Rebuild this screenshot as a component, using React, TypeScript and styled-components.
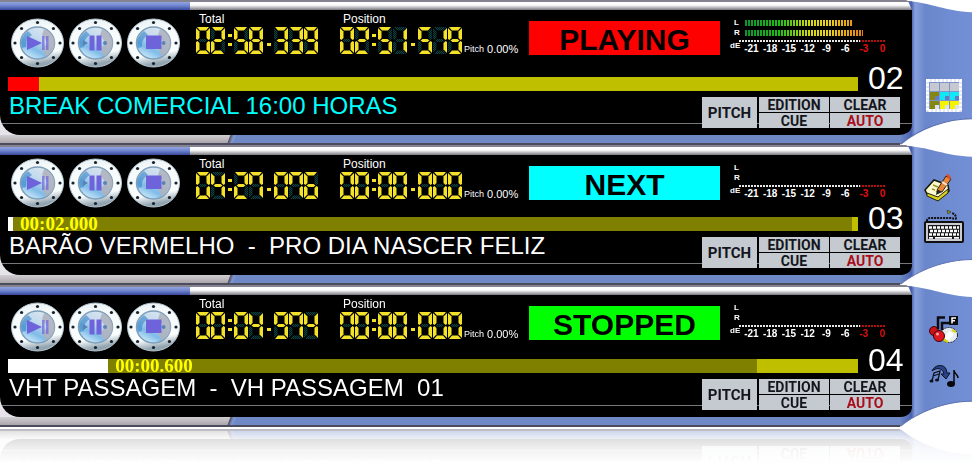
import React from "react";
import styled, { createGlobalStyle } from "styled-components";

const GlobalStyle = createGlobalStyle`
  * { box-sizing: border-box; }
  body {
    margin: 0;
    background: #fff;
    font-family: "Liberation Sans", Arial, sans-serif;
  }
  button { margin: 0; padding: 0; border: 0; font: inherit; cursor: pointer; }
`;

const Rack = styled.main`
  overflow: hidden;
  padding-bottom: 42px;
`;

const DeckFrame = styled.section<{ $reflect: boolean }>`
  position: relative;
  display: flex;
  ${(p) =>
    p.$reflect &&
    "-webkit-box-reflect: below 2px linear-gradient(transparent 76%, rgba(255,255,255,0.06) 86%, rgba(255,255,255,0.13) 93%, rgba(255,255,255,0.4));"}
`;

const Body = styled.div`
  flex: 1;
  min-width: 0;
`;

const TopTrim = styled.div`
  height: 10px;
  border-top: 2px solid #85838f;
  background:
    linear-gradient(#93a5e0, #7086cf 45%, #37479c) 0 0 / 190px 100% no-repeat,
    linear-gradient(#ffffff, #fafafa 40%, #77777f);
`;

const BottomTrim = styled.div`
  height: 10px;
  border-bottom: 2px solid #4c4c5c;
  background:
    linear-gradient(110deg, transparent 216px, #55555f 217px, #7f96d4 220px, #6f88c6 223px),
    linear-gradient(#d2cfd3, #aaa5ab);
`;

const ScreenWell = styled.div`
  background: linear-gradient(90deg, #e6e4ea 0 40px, #5c76bd 60px);
`;

const Screen = styled.div`
  border-radius: 0 0 8px 20px;
  background: linear-gradient(#77777c, #77777c) 0 calc(100% - 11px) / 100% 1px no-repeat #000;
  color: #fff;
`;

const Upper = styled.div<{ $height: number }>`
  display: flex;
  height: ${(p) => p.$height}px;
  padding: 0 20px 0 11px;
`;

const Knobs = styled.div<{ $top: number }>`
  display: flex;
  gap: 5px;
  height: 50px;
  margin: ${(p) => p.$top}px 16px 0 0;
`;

const Knob = styled.button`
  width: 53px;
  height: 50px;
  background: transparent;
  svg { display: block; }
`;

const Clock = styled.div`
  width: 122px;
  margin: 2px 22px 0 0;
  & + & { margin-right: 2px; }
`;

const ClockLabel = styled.div`
  padding-left: 3px;
  font-size: 12px;
  line-height: 14px;
`;

const Digits = styled.svg`
  display: block;
  margin-top: 1px;
`;

const Pitch = styled.div`
  display: flex;
  gap: 3px;
  width: 57px;
  margin: 33px 8px 0 0;
  font-size: 11px;
  line-height: 12px;
  small { font-size: 9px; }
`;

const Status = styled.div<{ $color: string }>`
  flex: 1;
  height: 34px;
  margin: 11px 10px 0 0;
  background: ${(p) => p.$color};
  color: #000;
  font-size: 30px;
  font-weight: bold;
  line-height: 38px;
  text-align: center;
`;

const MeterBox = styled.div`
  width: 162px;
  margin-top: 8px;
  font-weight: bold;
`;

const Channel = styled.div`
  display: flex;
  align-items: center;
  height: 10px;
  padding-left: 4px;
  font-size: 8px;
  line-height: 10px;
`;

const ChannelName = styled.span`
  width: 11px;
`;

const Level = styled.div`
  height: 6px;
  background:
    repeating-linear-gradient(90deg, transparent 0 2px, #101000 2px 3px),
    linear-gradient(90deg, #109038, #18c018 34px, #d0d818 64px, #e8d028 84px, #e07818 120px);
`;

const Ticks = styled.div`
  height: 2px;
  margin: 2px 7px 0 9px;
  background:
    repeating-linear-gradient(90deg, transparent 0 2px, #000 2px 3px),
    linear-gradient(90deg, #e8e8e8 83%, #b01010 83%);
`;

const Scale = styled.div`
  display: flex;
  font-size: 10px;
  line-height: 13px;
`;

const Unit = styled.span`
  width: 12px;
  font-size: 8px;
  line-height: 8px;
`;

const Marks = styled.div`
  display: grid;
  flex: 1;
  grid-template-columns: repeat(8, 1fr);
  text-align: center;
`;

const Mark = styled.span<{ $hot: boolean }>`
  color: ${(p) => (p.$hot ? "#e01010" : "#fff")};
`;

const TrackRow = styled.div`
  display: flex;
  align-items: flex-end;
  height: 28px;
  margin-top: -14px;
  padding-left: 8px;
`;

const Track = styled.div`
  display: flex;
  flex: 1;
  height: 14px;
  background: #bfbf00;
`;

const Segment = styled.div<{ $color: string }>`
  background: ${(p) => p.$color};
`;

const Remaining = styled.span`
  display: block;
  padding-left: 7px;
  color: #ff0;
  font: bold 19px/14px "Liberation Serif", "Times New Roman", serif;
`;

const DeckNumber = styled.div`
  width: 54px;
  height: 28px;
  padding-left: 10px;
  font-size: 32px;
  line-height: 30px;
`;

const Lower = styled.div`
  display: flex;
  justify-content: space-between;
  height: 44px;
  padding: 6px 12px 0 9px;
`;

const Title = styled.h2<{ $color: string }>`
  margin: 0;
  color: ${(p) => p.$color};
  font-size: 24px;
  font-weight: normal;
  line-height: 18px;
  white-space: pre;
`;

const Keys = styled.div`
  display: grid;
  grid-template-columns: 56px 70px 70px;
  grid-template-rows: 15px 15px;
  gap: 1px;
  height: 31px;
`;

const Key = styled.button<{ $tall?: boolean; $red?: boolean }>`
  grid-row: ${(p) => (p.$tall ? "span 2" : "auto")};
  margin-right: ${(p) => (p.$tall ? 1 : 0)}px;
  background: #c5cad1;
  color: ${(p) => (p.$red ? "#a80e1c" : "#14161c")};
  font: bold ${(p) => (p.$tall ? 15 : 14)}px/16px Roboto, "Liberation Sans", sans-serif;
`;

const Handle = styled.aside`
  display: flex;
  flex-direction: column;
  align-items: center;
  justify-content: flex-end;
  width: 60px;
`;

const HandleShape = styled.svg`
  position: absolute;
  top: 0;
  right: 0;
  width: 72px;
  height: 100%;
`;

const Tools = styled.div<{ $bottom: number; $gap: number }>`
  position: relative;
  display: flex;
  flex-direction: column;
  align-items: center;
  gap: ${(p) => p.$gap}px;
  padding: 0 0 ${(p) => p.$bottom}px 3px;
`;

const Tool = styled.button`
  background: transparent;
  svg { display: block; }
`;

/* Segment outlines a–g on a 14×27 cell */
const SEGMENTS: Record<string, string> = {
  a: "M1 0H13L10 3.5H4Z",
  b: "M14 1V12L12.5 13L10.5 11V4.5Z",
  c: "M14 26V15L12.5 14L10.5 16V22.5Z",
  d: "M1 27H13L10 23.5H4Z",
  e: "M0 26V15L1.5 14L3.5 16V22.5Z",
  f: "M0 1V12L1.5 13L3.5 11V4.5Z",
  g: "M2.5 13.5L4.5 12H9.5L11.5 13.5L9.5 15H4.5Z",
};

const LIT: Record<string, string> = {
  "0": "abcdef",
  "1": "bc",
  "2": "abged",
  "3": "abgcd",
  "4": "fgbc",
  "5": "afgcd",
  "6": "afgedc",
  "7": "abcf",
  "8": "abcdefg",
  "9": "abcdfg",
};

const CELL_X = [0, 15, 30, 38, 53, 68, 78, 93, 108];

function SegmentDisplay({ value, label }: { value: string; label: string }) {
  return (
    <Digits width="122" height="27" viewBox="0 0 122 27" role="img" aria-label={`${label} ${value}`}>
      <defs>
        <pattern id="ghost" width="2" height="2" patternUnits="userSpaceOnUse">
          <path d="M0 0h2v2h-2z" fill="#021414" />
          <path d="M0 0h1v1h-1zM1 1h1v1h-1z" fill="#0c4444" />
        </pattern>
      </defs>
      {value.split("").map((ch, i) => (
        <g key={i} transform={`translate(${CELL_X[i]} 0)`} fill="#f4e12a">
          {ch === ":" && <path d="M2 7h4v3h-4zM2 16h4v3h-4z" />}
          {ch === "." && <path d="M3 16h4v3h-4z" />}
          {LIT[ch] &&
            Object.keys(SEGMENTS).map((s) => (
              <path key={s} d={SEGMENTS[s]} fill={LIT[ch].includes(s) ? undefined : "url(#ghost)"} />
            ))}
        </g>
      ))}
    </Digits>
  );
}

type KnobKind = "play" | "pause" | "stop";

function KnobFace({ kind }: { kind: KnobKind }) {
  const bolts = [0, 45, 90, 135, 180, 225, 270, 315].map((a) => (a * Math.PI) / 180);
  return (
    <svg width="53" height="50" viewBox="0 0 53 50" aria-hidden="true">
      <defs>
        <linearGradient id="rim" x1="0" y1="0" x2="0.2" y2="1">
          <stop offset="0" stopColor="#e6eef2" />
          <stop offset="0.3" stopColor="#f6fafb" />
          <stop offset="0.8" stopColor="#fafdfd" />
          <stop offset="1" stopColor="#93a5b0" />
        </linearGradient>
        <linearGradient id="lens" x1="0.8" y1="0" x2="0.25" y2="1">
          <stop offset="0" stopColor="#dde6ee" />
          <stop offset="0.4" stopColor="#c3daee" />
          <stop offset="0.7" stopColor="#7fbbe8" />
          <stop offset="1" stopColor="#d6effb" />
        </linearGradient>
      </defs>
      <ellipse cx="26.5" cy="25" rx="26" ry="24" fill="url(#rim)" stroke="#b4c6d0" />
      <ellipse cx="26.5" cy="25" rx="17" ry="16" fill="url(#lens)" stroke="#7d9fba" strokeWidth="1.5" />
      <path d="M11 30A16 15 0 0 1 17 13L21 17A12 12 0 0 0 15 29Z" fill="#3b86c8" opacity="0.6" />
      <path d="M33 11A16 15 0 0 1 35 38.5L31 31L37 25L31 17Z" fill="#aeb2bc" opacity="0.85" />
      {bolts.map((a, i) => (
        <circle key={i} cx={26.5 + Math.cos(a) * 22.5} cy={25 + Math.sin(a) * 20.5} r="1.6" fill="#16222c" />
      ))}
      <g fill="#6f63dc">
        {kind === "play" && (
          <>
            <path d="M16 18L31 25L16 32Z" />
            <path d="M31 18h2.5v14h-2.5zM35 18h2.5v14h-2.5z" opacity="0.7" />
          </>
        )}
        {kind === "pause" && (
          <>
            <path d="M20.5 17.5h5v15h-5zM27.5 17.5h5v15h-5z" />
            <path d="M14 22l5 3l-5 3z" fill="#5a83b4" />
            <circle cx="36" cy="25" r="2" fill="#5a83b4" />
          </>
        )}
        {kind === "stop" && (
          <>
            <path d="M19 17.5h15.5v13.5h-15.5z" />
            <circle cx="36.5" cy="25" r="2" fill="#5a83b4" />
          </>
        )}
      </g>
    </svg>
  );
}

function GridIcon() {
  const cells = ["#c6cad0", "#c6cad0", "#c6cad0", "#858510", "#10e8f8", "#10e8f8", "#858510", "#f4f400", "#f4f400"];
  return (
    <svg width="36" height="33" viewBox="0 0 36 33" aria-hidden="true">
      <path d="M1.5 1.5h33v30h-33z" fill="#7f93cc" stroke="#c9d2ee" strokeWidth="3" />
      <path d="M1.5 1.5h33v30h-33z" fill="none" stroke="#fff" strokeWidth="3" strokeDasharray="3 1" />
      {cells.map((c, i) => {
        const x = 4 + (i % 3) * 10;
        const y = 4 + Math.floor(i / 3) * 9;
        return (
          <g key={i}>
            <path d={`M${x} ${y}h9v8h-9z`} fill={c} />
            {i > 2 && <path d={`M${x + 5} ${y + 4}h4v4h-4z`} fill={i > 5 ? "#dfe2ea" : "#5f7cc6"} />}
          </g>
        );
      })}
    </svg>
  );
}

function NoteIcon() {
  return (
    <svg width="40" height="28" viewBox="0 0 40 28" aria-hidden="true">
      <path d="M1 16L10 6L24 11L25 17L14 26L3 20Z" fill="#fbf9d0" stroke="#161608" strokeWidth="1.5" />
      <path d="M3 19l11 4l10-8v4l-10 8l-11-5z" fill="#d9cf20" stroke="#26260a" />
      <path d="M9 11l5 2M12 18l5-4M8 15l3 1" stroke="#9d9420" strokeWidth="1.5" />
      <path d="M13 16L22 2L27 5L18 18Z" fill="#e8863c" stroke="#33200c" />
      <path d="M22 1l2-1l3 3l-1 3z" fill="#e04c30" />
      <path d="M18 8l5 3" stroke="#f6e8c8" strokeWidth="2" />
      <path d="M13 16l5 2l-6 3z" fill="#222" />
    </svg>
  );
}

function KeyboardIcon() {
  return (
    <svg width="40" height="34" viewBox="0 0 40 34" aria-hidden="true">
      <path d="M3 11c0-3 2-3 3-3h20c3 0 6 2 6 0s-1-4-4-5" fill="none" stroke="#101010" strokeWidth="2" strokeDasharray="2 1" />
      <path d="M23 0l4 2l-3 2z" fill="#9a9a10" stroke="#111" strokeWidth=".5" />
      <rect x="1" y="12" width="38" height="20" rx="1" fill="#c9cbd3" stroke="#101010" strokeWidth="2" />
      <path d="M4 15h32v14h-32z" fill="#181818" />
      <path d="M5 17.5h30M6 21h29M5 24.5h30" stroke="#fff" strokeWidth="2.5" strokeDasharray="3 1" />
      <path d="M5 27.8h4M11 27.8h17M30 27.8h5" stroke="#fff" strokeWidth="1.8" />
    </svg>
  );
}

function LinkIcon() {
  return (
    <svg width="30" height="28" viewBox="0 0 30 28" aria-hidden="true">
      <ellipse cx="20" cy="19" rx="8.5" ry="7.5" fill="#e7edef" stroke="#222" strokeDasharray="2 1" />
      <path d="M20 15l5 3l-5 6l-5-1z" fill="#fff" />
      <path d="M14 23l5 3M23 14l4 2" stroke="#d7d410" strokeWidth="2.5" />
      <circle cx="5" cy="15" r="4.5" fill="#c9121c" stroke="#3c0508" />
      <circle cx="10" cy="20" r="5.5" fill="#dd1622" stroke="#3c0508" />
      <circle cx="8.5" cy="18" r="1.5" fill="#f9a5a5" />
      <path d="M9 13V1.5h7M13 14V7h7" fill="none" stroke="#0b0b10" strokeWidth="2.5" />
      <path d="M20 0h9v9h-9z" fill="#0b0b10" />
      <path d="M23 7.5v-5.5h4M23 4.7h3" fill="none" stroke="#fff" strokeWidth="1.5" />
    </svg>
  );
}

function NotesIcon() {
  return (
    <svg width="30" height="24" viewBox="0 0 30 24" aria-hidden="true">
      <path d="M3 7C6 0 15 0 17 5L18 9L21 9L17 15L12 10L15 10C14 4 8 3 3 7Z" fill="#2c4288" stroke="#0c1020" />
      <path d="M3 17l2-8l6-2l-2 9M4 12l6-2" fill="none" stroke="#0c1020" strokeWidth="1.3" />
      <ellipse cx="2.5" cy="17" rx="2" ry="1.5" fill="#0c1020" />
      <ellipse cx="8" cy="16" rx="2" ry="1.5" fill="#0c1020" />
      <ellipse cx="22" cy="20" rx="4" ry="3" fill="#08080c" />
      <path d="M25 20V6c0 4 4 4 4 8" fill="none" stroke="#08080c" strokeWidth="1.5" />
    </svg>
  );
}

const MARKS = ["-21", "-18", "-15", "-12", "-9", "-6", "-3", "0"];

function Meter({ levels }: { levels: [number, number] }) {
  return (
    <MeterBox>
      {["L", "R"].map((name, i) => (
        <Channel key={name}>
          <ChannelName>{name}</ChannelName>
          <Level style={{ width: levels[i] }} />
        </Channel>
      ))}
      <Ticks />
      <Scale>
        <Unit>dE</Unit>
        <Marks>
          {MARKS.map((m, i) => (
            <Mark key={m} $hot={i > 5}>{m}</Mark>
          ))}
        </Marks>
      </Scale>
    </MeterBox>
  );
}

interface ToolItem {
  name: string;
  icon: React.ReactNode;
}

interface DeckData {
  number: string;
  title: string;
  titleColor: string;
  total: string;
  position: string;
  status: string;
  statusColor: string;
  levels: [number, number];
  played: number;
  playedColor: string;
  cued: number;
  remaining?: string;
  upper: number;
  knobTop: number;
  toolsBottom: number;
  toolsGap: number;
  tools: ToolItem[];
}

function Deck({ deck, reflect }: { deck: DeckData; reflect: boolean }) {
  return (
    <DeckFrame $reflect={reflect} aria-label={`Deck ${deck.number}`}>
      <Body>
        <TopTrim />
        <ScreenWell>
          <Screen>
            <Upper $height={deck.upper}>
              <Knobs $top={deck.knobTop}>
                <Knob aria-label="Play"><KnobFace kind="play" /></Knob>
                <Knob aria-label="Pause"><KnobFace kind="pause" /></Knob>
                <Knob aria-label="Stop"><KnobFace kind="stop" /></Knob>
              </Knobs>
              <Clock>
                <ClockLabel>Total</ClockLabel>
                <SegmentDisplay label="Total" value={deck.total} />
              </Clock>
              <Clock>
                <ClockLabel>Position</ClockLabel>
                <SegmentDisplay label="Position" value={deck.position} />
              </Clock>
              <Pitch><small>Pitch</small>0.00%</Pitch>
              <Status $color={deck.statusColor}>{deck.status}</Status>
              <Meter levels={deck.levels} />
            </Upper>
            <TrackRow>
              <Track>
                <Segment $color={deck.playedColor} style={{ width: `${deck.played}%` }} />
                <Segment $color="#808000" style={{ width: `${deck.cued}%` }}>
                  {deck.remaining && <Remaining>{deck.remaining}</Remaining>}
                </Segment>
              </Track>
              <DeckNumber>{deck.number}</DeckNumber>
            </TrackRow>
            <Lower>
              <Title $color={deck.titleColor}>{deck.title}</Title>
              <Keys>
                <Key $tall>PITCH</Key>
                <Key>EDITION</Key>
                <Key>CLEAR</Key>
                <Key>CUE</Key>
                <Key $red>AUTO</Key>
              </Keys>
            </Lower>
          </Screen>
        </ScreenWell>
        <BottomTrim />
      </Body>
      <Handle>
        <HandleShape viewBox="0 0 72 143" preserveAspectRatio="none" aria-hidden="true">
          <defs>
            <linearGradient id="handle" x1="0" x2="1">
              <stop offset="0" stopColor="#6f88c6" />
              <stop offset="0.16" stopColor="#4a62ae" />
              <stop offset="0.21" stopColor="#88a0dc" />
              <stop offset="0.35" stopColor="#6b87cc" />
              <stop offset="1" stopColor="#7390d6" />
            </linearGradient>
          </defs>
          <path d="M6 0H72V13C45 11 32 3 8 1Z" fill="#fff" />
          <path d="M0 143L1 141C18 126 45 117 72 117V143Z" fill="#fff" />
          <path d="M8 1C32 3 45 11 72 12V117C45 117 18 128 1 142L0 133C9 132 12 128 12 122V10Z" fill="url(#handle)" />
          <path d="M1 142C18 128 45 117 72 117" fill="none" stroke="#5a6fae" />
        </HandleShape>
        <Tools $bottom={deck.toolsBottom} $gap={deck.toolsGap}>
          {deck.tools.map((t) => (
            <Tool key={t.name} aria-label={t.name}>{t.icon}</Tool>
          ))}
        </Tools>
      </Handle>
    </DeckFrame>
  );
}

const DECKS: DeckData[] = [
  {
    number: "02",
    title: "BREAK COMERCIAL 16:00 HORAS",
    titleColor: "#00ffff",
    total: "02:58.339",
    position: "02:51.519",
    status: "PLAYING",
    statusColor: "#ff0000",
    levels: [108, 118],
    played: 3.6,
    playedColor: "#ff0000",
    cued: 0,
    upper: 67,
    knobTop: 8,
    toolsBottom: 33,
    toolsGap: 8,
    tools: [{ name: "Cart grid", icon: <GridIcon /> }],
  },
  {
    number: "03",
    title: "BARÃO VERMELHO  -  PRO DIA NASCER FELIZ",
    titleColor: "#ffffff",
    total: "04:27.076",
    position: "00:00.000",
    status: "NEXT",
    statusColor: "#00ffff",
    levels: [0, 0],
    played: 0.6,
    playedColor: "#ffffff",
    cued: 98.7,
    remaining: "00:02.000",
    upper: 62,
    knobTop: 3,
    toolsBottom: 41,
    toolsGap: 8,
    tools: [
      { name: "Notes", icon: <NoteIcon /> },
      { name: "Keyboard", icon: <KeyboardIcon /> },
    ],
  },
  {
    number: "04",
    title: "VHT PASSAGEM  -  VH PASSAGEM  01",
    titleColor: "#ffffff",
    total: "00:04.974",
    position: "00:00.000",
    status: "STOPPED",
    statusColor: "#00ff00",
    levels: [0, 0],
    played: 11.8,
    playedColor: "#ffffff",
    cued: 76.3,
    remaining: "00:00.600",
    upper: 64,
    knobTop: 7,
    toolsBottom: 39,
    toolsGap: 20,
    tools: [
      { name: "Link files", icon: <LinkIcon /> },
      { name: "Mix music", icon: <NotesIcon /> },
    ],
  },
];

export default function App() {
  return (
    <>
      <GlobalStyle />
      <Rack>
        {DECKS.map((deck, i) => (
          <Deck key={deck.number} deck={deck} reflect={i === DECKS.length - 1} />
        ))}
      </Rack>
    </>
  );
}
